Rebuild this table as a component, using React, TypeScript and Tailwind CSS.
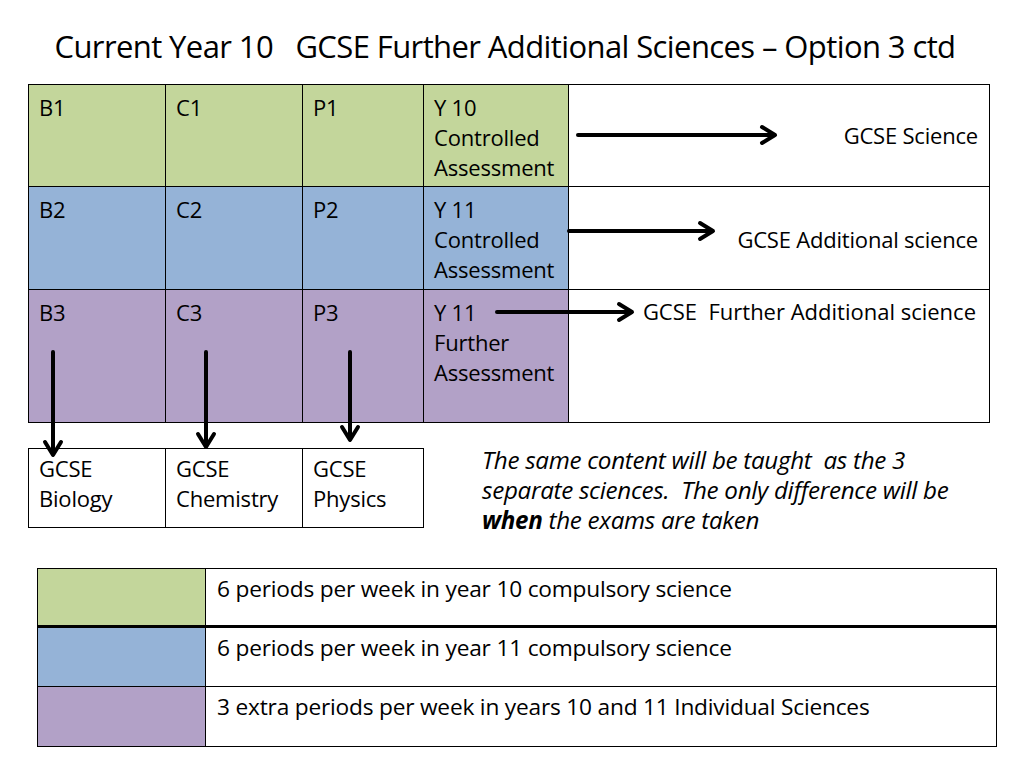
import React from "react";

const GREEN = "bg-[#c3d69b]";
const BLUE = "bg-[#95b3d7]";
const PURPLE = "bg-[#b2a1c7]";

const font = { fontFamily: "'Open Sans', Lato, sans-serif" };

function Arrow({ x1, y1, x2, y2 }: { x1: number; y1: number; x2: number; y2: number }) {
  const dx = x2 - x1;
  const dy = y2 - y1;
  const len = Math.hypot(dx, dy);
  const ux = dx / len;
  const uy = dy / len;
  const h = 13;
  const w = 8;
  const bx = x2 - ux * h;
  const by = y2 - uy * h;
  const p1 = `${bx - uy * w},${by + ux * w}`;
  const p2 = `${bx + uy * w},${by - ux * w}`;
  return (
    <g stroke="#000" strokeWidth={4} fill="none" strokeLinecap="round" strokeLinejoin="round">
      <line x1={x1} y1={y1} x2={x2 - ux * 2} y2={y2 - uy * 2} />
      <polyline points={`${p1} ${x2},${y2} ${p2}`} />
    </g>
  );
}

function Row({ color, cells, last, height }: { color: string; cells: string[][]; last: React.ReactNode; height: string }) {
  return (
    <div className={`flex ${height} border-b border-black last:border-b-0`}>
      {cells.map((c, i) => (
        <div
          key={i}
          className={`${color} border-r border-black px-[10px] pt-[7px] leading-[30px] ${
            i === 0 ? "w-[137px]" : i === 1 ? "w-[137px]" : i === 2 ? "w-[121px]" : "w-[145px]"
          }`}
        >
          {c.map((line, j) => (
            <div key={j}>{line}</div>
          ))}
        </div>
      ))}
      <div className="flex-1 bg-white">{last}</div>
    </div>
  );
}

export default function App() {
  return (
    <div className="relative w-[1024px] h-[768px] bg-white text-black overflow-hidden" style={font}>
      <h1 className="pt-[26px] text-center text-[31px] leading-[40px] tracking-[-0.6px] pr-[14px]">
        Current Year 10&nbsp;&nbsp; GCSE Further Additional Sciences – Option 3 ctd
      </h1>

      {/* Main table */}
      <div className="ml-[28px] mt-[18px] w-[962px] border border-black text-[22px] tracking-[-0.2px]">
        <Row
          color={GREEN}
          height="h-[102px]"
          cells={[["B1"], ["C1"], ["P1"], ["Y 10", "Controlled", "Assessment"]]}
          last={<div className="h-full flex items-center justify-end pr-[11px]">GCSE Science</div>}
        />
        <Row
          color={BLUE}
          height="h-[103px]"
          cells={[["B2"], ["C2"], ["P2"], ["Y 11", "Controlled", "Assessment"]]}
          last={<div className="h-full flex items-center justify-end pr-[11px] pt-[2px]">GCSE Additional science</div>}
        />
        <Row
          color={PURPLE}
          height="h-[132px]"
          cells={[["B3"], ["C3"], ["P3"], ["Y 11", "Further", "Assessment"]]}
          last={<div className="flex justify-end pr-[13px] pt-[6px] leading-[30px] whitespace-pre tracking-[0px]">GCSE  Further Additional science</div>}
        />
      </div>

      <div className="flex mt-[25px] text-[22px] tracking-[-0.2px] h-[80px]">
        {/* Outcome boxes */}
        <div className="ml-[28px] flex h-[80px] border border-black">
          {[["GCSE", "Biology", "w-[137px]"], ["GCSE", "Chemistry", "w-[137px]"], ["GCSE", "Physics", "w-[120px]"]].map(
            ([a, b, w], i) => (
              <div key={i} className={`${w} px-[10px] pt-[4px] leading-[30px] ${i < 2 ? "border-r border-black" : ""}`}>
                <div>{a}</div>
                <div>{b}</div>
              </div>
            )
          )}
        </div>
        <p className="ml-[58px] -mt-[3px] italic text-[24.2px] tracking-[-0.3px] leading-[30px] whitespace-nowrap">
          The same content will be taught&nbsp; as the 3
          <br />
          separate sciences.&nbsp; The only difference will be
          <br />
          <b>when</b> the exams are taken
        </p>
      </div>

      {/* Key */}
      <div className="ml-[37px] mt-[40px] w-[960px] border border-black text-[22.7px] tracking-[-0.2px]">
        {[
          [GREEN, "6 periods per week in year 10 compulsory science", "border-b-[3px]"],
          [BLUE, "6 periods per week in year 11 compulsory science", "border-b"],
          [PURPLE, "3 extra periods per week in years 10 and 11 Individual Sciences", ""],
        ].map(([c, t, b], i) => (
          <div key={i} className={`flex h-[59px] border-black ${b}`}>
            <div className={`${c} w-[168px] border-r border-black`} />
            <div className="flex-1 px-[11px] pt-[5px] leading-[30px]">{t}</div>
          </div>
        ))}
      </div>

      <svg className="absolute inset-0 pointer-events-none" width={1024} height={768}>
        <Arrow x1={578} y1={135} x2={775} y2={135} />
        <Arrow x1={569} y1={231} x2={713} y2={231} />
        <Arrow x1={497} y1={312} x2={632} y2={312} />
        <Arrow x1={53} y1={352} x2={53} y2={455} />
        <Arrow x1={206} y1={352} x2={206} y2={447} />
        <Arrow x1={350} y1={352} x2={350} y2={440} />
      </svg>
    </div>
  );
}
